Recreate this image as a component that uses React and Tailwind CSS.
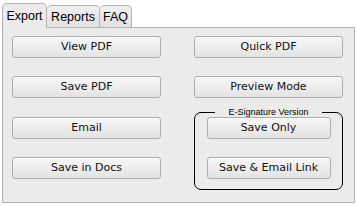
import React from "react";

const btn =
  "h-[22px] flex items-center justify-center rounded-[3px] border border-[#acacac] bg-gradient-to-b from-[#f7f7f7] to-[#e3e3e3] text-[11px] text-[#111] shadow-[inset_0_1px_0_#ffffff]";

function Btn({ children, className = "" }) {
  return (
    <div className={`${btn} ${className}`} style={{ fontFamily: '"DejaVu Sans", Verdana, sans-serif' }}>
      {children}
    </div>
  );
}

export default function App() {
  return (
    <div className="w-[357px] h-[206px] bg-white" style={{ fontFamily: '"Liberation Sans", Arial, sans-serif' }}>
      <div className="flex items-end pl-[2px] pt-[3px] h-[27px]">
        <div className="relative z-10 w-[45px] h-[25px] mb-[-1px] rounded-t-[5px] border border-b-0 border-[#b3b3b3] bg-[#ebebeb] flex items-start justify-center pt-[5px] text-[12.5px] leading-[14px] text-black">
          Export
        </div>
        <div className="w-[53px] h-[22px] rounded-t-[5px] border border-b-0 border-l-0 border-[#b3b3b3] bg-gradient-to-b from-[#f0f0f0] to-[#e2e2e2] flex items-start justify-center pt-[4px] text-[12.5px] leading-[14px] text-black">
          Reports
        </div>
        <div className="w-[32px] h-[22px] rounded-t-[5px] border border-b-0 border-l-0 border-[#b3b3b3] bg-gradient-to-b from-[#f0f0f0] to-[#e2e2e2] flex items-start justify-center pt-[4px] text-[12.5px] leading-[14px] text-black">
          FAQ
        </div>
      </div>
      <div className="ml-[2px] w-[353px] h-[176px] border border-[#b3b3b3] bg-[#ebebeb] flex pl-[9px] pt-[8px]">
        <div className="w-[149px] flex flex-col">
          <Btn>View PDF</Btn>
          <Btn className="mt-[18px]">Save PDF</Btn>
          <Btn className="mt-[19px]">Email</Btn>
          <Btn className="mt-[18px]">Save in Docs</Btn>
        </div>
        <div className="ml-[33px] w-[149px] flex flex-col">
          <Btn>Quick PDF</Btn>
          <Btn className="mt-[18px]">Preview Mode</Btn>
          <fieldset className="mt-[9px] w-[149px] border border-black rounded-[7px] pb-[10px] flex flex-col items-center">
            <legend className="mx-auto px-[13px] text-[9px] leading-[10px] text-black">
              E-Signature Version
            </legend>
            <Btn className="w-[124px]">Save Only</Btn>
            <Btn className="w-[124px] mt-[18px]">Save &amp; Email Link</Btn>
          </fieldset>
        </div>
      </div>
    </div>
  );
}
